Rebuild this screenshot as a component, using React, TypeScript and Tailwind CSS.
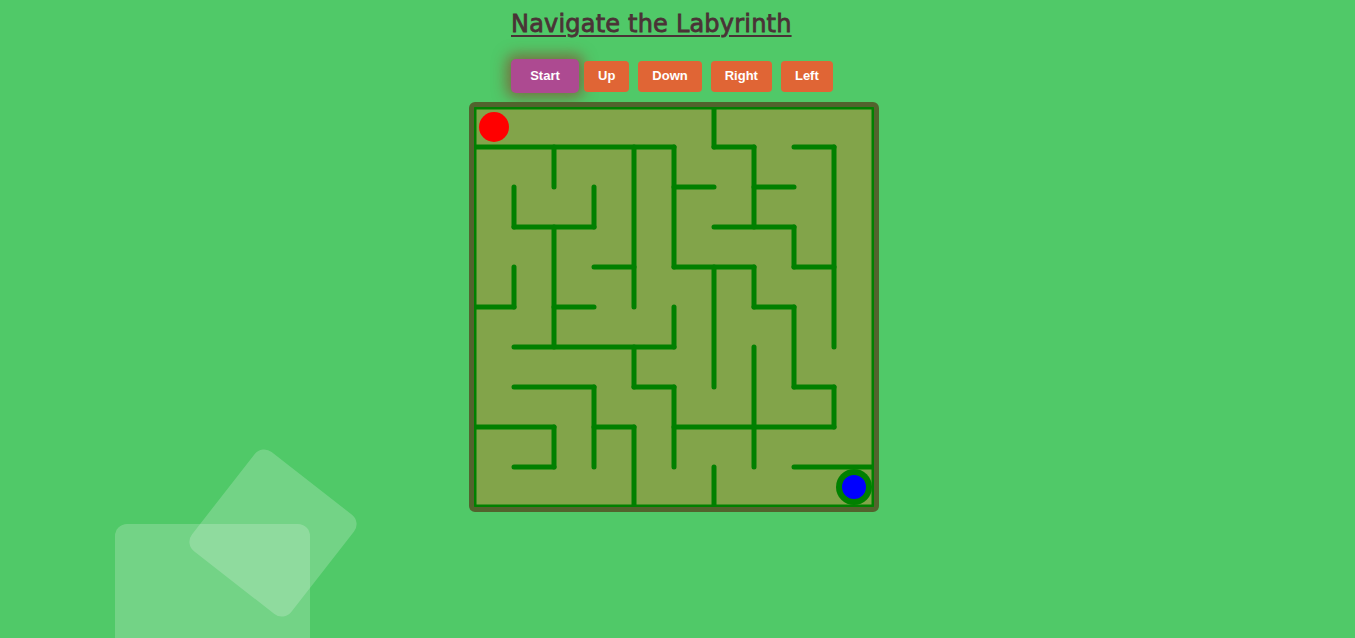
type Seg = [number, number, number];

// walls in grid units: H = [row, colFrom, colTo], V = [col, rowFrom, rowTo]
const hWalls: Seg[] = [
  [0, 0, 10], [10, 0, 10],
  [1, 0, 5], [1, 6, 7], [1, 8, 9],
  [2, 5, 6], [2, 7, 8],
  [3, 1, 3], [3, 6, 8],
  [4, 3, 4], [4, 5, 7], [4, 8, 9],
  [5, 0, 1], [5, 2, 3], [5, 7, 8],
  [6, 1, 5],
  [7, 1, 3], [7, 4, 5], [7, 8, 9],
  [8, 0, 2], [8, 3, 4], [8, 5, 9],
  [9, 1, 2], [9, 8, 10],
];

const vWalls: Seg[] = [
  [0, 0, 10], [10, 0, 10],
  [1, 2, 3], [1, 4, 5],
  [2, 1, 2], [2, 3, 6], [2, 8, 9],
  [3, 2, 3], [3, 7, 9],
  [4, 1, 5], [4, 6, 7], [4, 8, 10],
  [5, 1, 4], [5, 5, 6], [5, 7, 9],
  [6, 0, 1], [6, 4, 7], [6, 9, 10],
  [7, 1, 3], [7, 4, 5], [7, 6, 9],
  [8, 3, 4], [8, 5, 7],
  [9, 1, 6], [9, 7, 8],
];

const CELL = 40;

function Maze() {
  return (
    <div className="mt-[9px] w-[410px] h-[410px] border-[5px] border-[#52632d] rounded-md overflow-hidden bg-[#82a44a]">
      <svg width="400" height="400" viewBox="0 0 400 400" className="block">
        {hWalls.map(([r, a, b], i) => (
          <line
            key={'h' + i}
            x1={a * CELL}
            y1={r * CELL}
            x2={b * CELL}
            y2={r * CELL}
            stroke="#008000"
            strokeWidth={5}
            strokeLinecap="round"
          />
        ))}
        {vWalls.map(([c, a, b], i) => (
          <line
            key={'v' + i}
            x1={c * CELL}
            y1={a * CELL}
            x2={c * CELL}
            y2={b * CELL}
            stroke="#008000"
            strokeWidth={5}
            strokeLinecap="round"
          />
        ))}
        {/* player */}
        <circle cx={20} cy={20} r={15} fill="#ff0000" />
        {/* goal */}
        <circle cx={380} cy={380} r={18} fill="#008000" />
        <circle cx={380} cy={380} r={12} fill="#0000ff" />
      </svg>
    </div>
  );
}

export default function App() {
  const moves = ['Up', 'Down', 'Right', 'Left'];

  return (
    <div className="relative min-h-screen h-[638px] overflow-hidden bg-[#50c968] flex justify-center pr-[7px]">
      <div className="absolute left-[115px] top-[524px] w-[195px] h-[200px] rounded-xl bg-white/20" />
      <div className="absolute left-[210px] top-[470px] w-[126px] h-[126px] rounded-xl bg-white/20 rotate-[38deg]" />

      <div className="relative flex flex-col w-[410px]">
        <div className="ml-[42px] pt-[9px]">
          <h1
            className="text-[24px] leading-[30px] text-[#4a3236] underline decoration-2 underline-offset-[3px] tracking-[0.2px] [-webkit-text-stroke:0.8px_#4a3236]"
            style={{ fontFamily: '"DejaVu Sans", sans-serif', fontWeight: 500 }}
          >
            Navigate the Labyrinth
          </h1>
          <div
            className="mt-[20px] h-[34px] flex items-center"
            style={{ fontFamily: '"Liberation Sans", Arial, sans-serif' }}
          >
            <button className="w-[68px] h-[34px] rounded-[5px] bg-[#ad4a91] text-white text-[13px] font-bold shadow-[0_0_14px_5px_rgba(140,60,40,0.6)]">
              Start
            </button>
            <div className="ml-[5px] flex items-center gap-[9px]">
              {moves.map((m) => (
                <button
                  key={m}
                  className="h-[31px] px-[14px] rounded-[4px] bg-[#e06535] text-white text-[13px] font-bold"
                >
                  {m}
                </button>
              ))}
            </div>
          </div>
        </div>
        <Maze />
      </div>
    </div>
  );
}
